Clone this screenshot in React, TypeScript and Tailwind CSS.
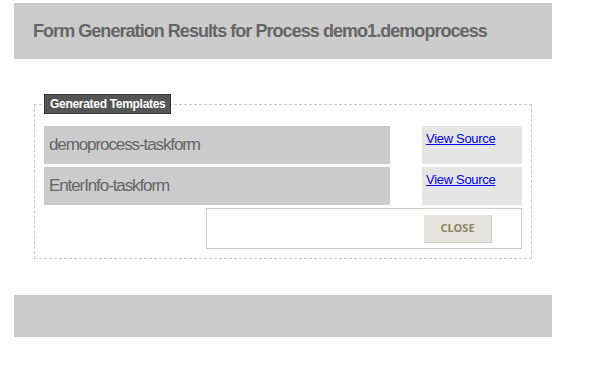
import React from 'react';

const templates = ['demoprocess-taskform', 'EnterInfo-taskform'];

const App: React.FC = () => {
    return (
        <div className="w-[596px] h-[392px] bg-white pt-[3px] font-['Liberation_Sans',Arial,sans-serif]">
            {/* Header */}
            <div className="ml-[14px] w-[538px] h-[56px] bg-[#cccccc] flex items-center pl-[19px]">
                <h1 className="text-[18px] font-bold text-[#666666] tracking-[-0.95px]">
                    Form Generation Results for Process demo1.demoprocess
                </h1>
            </div>

            {/* Generated templates */}
            <fieldset className="ml-[34px] mt-[35px] w-[498px] border border-dashed border-[#cccccc] px-[9px] pb-[9px] pt-0">
                <legend className="px-[5px] h-[20px] bg-[#555555] border border-[#333333] text-white text-[12px] font-bold leading-[18px] tracking-[-0.3px]">
                    Generated Templates
                </legend>
                <div className="mt-[12px] flex flex-col gap-[3px]">
                    {templates.map((name) => (
                        <div key={name} className="flex gap-[32px] h-[38px]">
                            <div className="w-[346px] bg-[#cccccc] flex items-center pl-[5px] text-[17px] text-[#666666] tracking-[-1.1px]">
                                {name}
                            </div>
                            <div className="w-[100px] bg-[#e5e5e5] pl-[4px] pt-[4px] leading-[15px]">
                                <a href="#" className="text-[13px] text-[#0000ee] underline tracking-[-0.3px]">
                                    View Source
                                </a>
                            </div>
                        </div>
                    ))}
                    <div className="ml-[162px] w-[316px] h-[41px] border border-[#cccccc] flex items-center justify-end pr-[29px]">
                        <button className="w-[68px] h-[28px] bg-[#e4e3dc] border-r border-b border-[#d2d1c8] text-[11px] font-bold text-[#8c8467] font-['Open_Sans',sans-serif]">
                            CLOSE
                        </button>
                    </div>
                </div>
            </fieldset>

            {/* Footer */}
            <div className="ml-[14px] mt-[36px] w-[538px] h-[42px] bg-[#cccccc]" />
        </div>
    );
};

export default App;
